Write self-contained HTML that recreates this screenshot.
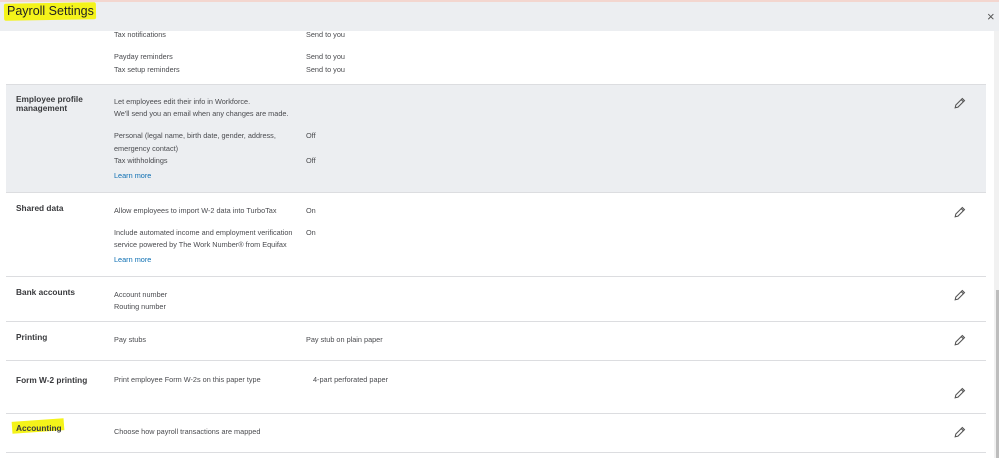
<!DOCTYPE html>
<html><head><meta charset="utf-8"><style>
*{margin:0;padding:0;box-sizing:border-box}
body{width:999px;height:458px;overflow:hidden;background:#fff;font-family:"Liberation Sans",sans-serif;position:relative;color:#393a3d}
.a{position:absolute;white-space:nowrap}
.t{font-size:7.3px;color:#4a4b4f;margin-top:1px}
.b{font-size:8.3px;font-weight:bold;color:#393a3d}
.l{font-size:7.3px;color:#0d6fb3;margin-top:1px}
.hr{position:absolute;left:6px;width:980px;height:1px;background:#dcdde0}
.p{position:absolute;left:953px;width:13px;height:13px}
</style></head><body>
<div class="a" style="left:0;top:0;width:999px;height:31px;background:#eceef1"></div>
<div class="a" style="left:0;top:0;width:999px;height:2px;background:#f3d6cf"></div>
<div class="a" style="left:4px;top:3px;width:92px;height:17px;background:#f4f31a;border-radius:2px;transform:rotate(-1deg)"></div>
<div class="a" style="left:7px;top:4px;font-size:12.5px;color:#222">Payroll Settings</div>
<div class="a" style="left:987px;top:9px;font-size:13px;color:#555">×</div>
<div class="a" style="left:994px;top:31px;width:5px;height:427px;background:#f1f1f1"></div>
<div class="a" style="left:996px;top:290px;width:3px;height:168px;background:#bdbdbd"></div>

<div class="a t" style="left:114px;top:29px">Tax notifications</div><div class="a t" style="left:306px;top:29px">Send to you</div>
<div class="a t" style="left:114px;top:51px">Payday reminders</div><div class="a t" style="left:306px;top:51px">Send to you</div>
<div class="a t" style="left:114px;top:64px">Tax setup reminders</div><div class="a t" style="left:306px;top:64px">Send to you</div>

<div class="a" style="left:6px;top:84px;width:980px;height:108px;background:#eceef1"></div>
<div class="hr" style="top:84px"></div>
<div class="a b" style="left:16px;top:95px;line-height:9px">Employee profile<br>management</div>
<div class="a t" style="left:114px;top:96px">Let employees edit their info in Workforce.</div>
<div class="a t" style="left:114px;top:108px">We'll send you an email when any changes are made.</div>
<div class="a t" style="left:114px;top:130px">Personal (legal name, birth date, gender, address,</div>
<div class="a t" style="left:114px;top:143px">emergency contact)</div>
<div class="a t" style="left:306px;top:130px">Off</div>
<div class="a t" style="left:114px;top:155px">Tax withholdings</div><div class="a t" style="left:306px;top:155px">Off</div>
<div class="a l" style="left:114px;top:170px">Learn more</div>

<div class="hr" style="top:192px"></div>
<div class="a b" style="left:16px;top:203px">Shared data</div>
<div class="a t" style="left:114px;top:205px">Allow employees to import W-2 data into TurboTax</div><div class="a t" style="left:306px;top:205px">On</div>
<div class="a t" style="left:114px;top:227px">Include automated income and employment verification</div><div class="a t" style="left:306px;top:227px">On</div>
<div class="a t" style="left:114px;top:239px">service powered by The Work Number® from Equifax</div>
<div class="a l" style="left:114px;top:254px">Learn more</div>

<div class="hr" style="top:276px"></div>
<div class="a b" style="left:16px;top:287px">Bank accounts</div>
<div class="a t" style="left:114px;top:289px">Account number</div>
<div class="a t" style="left:114px;top:301px">Routing number</div>

<div class="hr" style="top:321px"></div>
<div class="a b" style="left:16px;top:332px">Printing</div>
<div class="a t" style="left:114px;top:334px">Pay stubs</div><div class="a t" style="left:306px;top:334px">Pay stub on plain paper</div>

<div class="hr" style="top:360px"></div>
<div class="a b" style="left:16px;top:375px">Form W-2 printing</div>
<div class="a t" style="left:114px;top:374px">Print employee Form W-2s on this paper type</div><div class="a t" style="left:313px;top:374px">4-part perforated paper</div>

<div class="hr" style="top:413px"></div>
<div class="a" style="left:12px;top:420px;width:52px;height:12px;background:#f4f31a;transform:rotate(-4deg)"></div>
<div class="a b" style="left:16px;top:423px">Accounting</div>
<div class="a t" style="left:114px;top:426px">Choose how payroll transactions are mapped</div>
<div class="hr" style="top:452px"></div>

<svg class="p" style="top:97px" viewBox="0 0 12 12"><path d="M2 10l.6-2.6L8.6 1.4l2 2L4.6 9.4zM7.6 2.4l2 2" fill="none" stroke="#555" stroke-width="1"/></svg>
<svg class="p" style="top:206px" viewBox="0 0 12 12"><path d="M2 10l.6-2.6L8.6 1.4l2 2L4.6 9.4zM7.6 2.4l2 2" fill="none" stroke="#555" stroke-width="1"/></svg>
<svg class="p" style="top:289px" viewBox="0 0 12 12"><path d="M2 10l.6-2.6L8.6 1.4l2 2L4.6 9.4zM7.6 2.4l2 2" fill="none" stroke="#555" stroke-width="1"/></svg>
<svg class="p" style="top:334px" viewBox="0 0 12 12"><path d="M2 10l.6-2.6L8.6 1.4l2 2L4.6 9.4zM7.6 2.4l2 2" fill="none" stroke="#555" stroke-width="1"/></svg>
<svg class="p" style="top:387px" viewBox="0 0 12 12"><path d="M2 10l.6-2.6L8.6 1.4l2 2L4.6 9.4zM7.6 2.4l2 2" fill="none" stroke="#555" stroke-width="1"/></svg>
<svg class="p" style="top:426px" viewBox="0 0 12 12"><path d="M2 10l.6-2.6L8.6 1.4l2 2L4.6 9.4zM7.6 2.4l2 2" fill="none" stroke="#555" stroke-width="1"/></svg>
</body></html>
